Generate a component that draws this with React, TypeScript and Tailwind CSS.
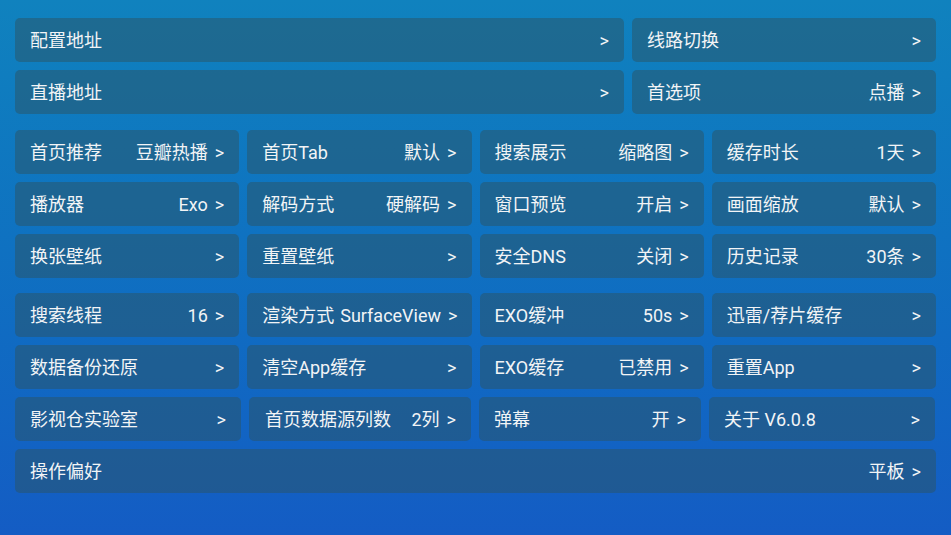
import React from 'react';

type Item = { label: string; value?: string };

const topRows: [Item, Item][] = [
  [{ label: '配置地址' }, { label: '线路切换' }],
  [{ label: '直播地址' }, { label: '首选项', value: '点播' }],
];

const groupA: Item[] = [
  { label: '首页推荐', value: '豆瓣热播' },
  { label: '首页Tab', value: '默认' },
  { label: '搜索展示', value: '缩略图' },
  { label: '缓存时长', value: '1天' },
  { label: '播放器', value: 'Exo' },
  { label: '解码方式', value: '硬解码' },
  { label: '窗口预览', value: '开启' },
  { label: '画面缩放', value: '默认' },
  { label: '换张壁纸' },
  { label: '重置壁纸' },
  { label: '安全DNS', value: '关闭' },
  { label: '历史记录', value: '30条' },
];

const groupB: Item[] = [
  { label: '搜索线程', value: '16' },
  { label: '渲染方式', value: 'SurfaceView' },
  { label: 'EXO缓冲', value: '50s' },
  { label: '迅雷/荐片缓存' },
  { label: '数据备份还原' },
  { label: '清空App缓存' },
  { label: 'EXO缓存', value: '已禁用' },
  { label: '重置App' },
];

const groupC: Item[] = [
  { label: '影视仓实验室' },
  { label: '首页数据源列数', value: '2列' },
  { label: '弹幕', value: '开' },
  { label: '关于 V6.0.8' },
];

const Row: React.FC<Item & { className?: string }> = ({ label, value, className = '' }) => (
  <div
    className={`flex h-[44px] items-center justify-between gap-[6px] rounded-[5px] bg-[#2c5463]/50 pl-[15px] pr-[15px] text-[18px] leading-none text-[#f2f4f6] ${className}`}
  >
    <span className="whitespace-nowrap pt-[2px]">{label}</span>
    <span className="flex items-center whitespace-nowrap pt-[2px]">
      {value && <span>{value}</span>}
      <span className="ml-[7px]">&gt;</span>
    </span>
  </div>
);

export default function App() {
  return (
    <div
      className="h-[535px] w-[951px] overflow-hidden bg-linear-to-b from-[#1082be] to-[#145cc4] px-[15px] pt-[18px]"
      style={{ fontFamily: "Roboto, 'Noto Sans CJK SC', sans-serif" }}
    >
      <div className="flex flex-col gap-2">
        {topRows.map(([a, b]) => (
          <div key={a.label} className="flex gap-2">
            <Row {...a} className="w-[609px]" />
            <Row {...b} className="flex-1" />
          </div>
        ))}
      </div>

      <div className="mt-4 grid grid-cols-4 gap-2">
        {groupA.map((item) => (
          <Row key={item.label} {...item} />
        ))}
      </div>

      <div className="mt-[15px] grid grid-cols-4 gap-2">
        {groupB.map((item) => (
          <Row key={item.label} {...item} />
        ))}
      </div>

      <div className="mt-2 grid grid-cols-[226px_222px_222px_226px] gap-2">
        <Row {...groupC[0]} />
        <Row {...groupC[1]} className="pl-[16px]" />
        <Row {...groupC[2]} />
        <Row {...groupC[3]} />
      </div>

      <div className="mt-2">
        <Row label="操作偏好" value="平板" />
      </div>
    </div>
  );
}
